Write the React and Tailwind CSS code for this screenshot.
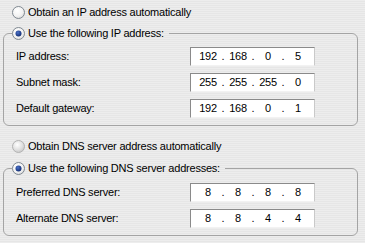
import React, { useId } from "react";

function Radio({ checked, dim }) {
  const id = useId().replace(/:/g, "");
  return (
    <svg width="13" height="13" viewBox="0 0 13 13" className="shrink-0 block">
      <defs>
        <radialGradient id={`g${id}`} cx="40%" cy="35%" r="75%">
          <stop offset="0" stopColor="#ffffff" />
          <stop offset="0.6" stopColor={dim ? "#dedede" : "#f2f2f2"} />
          <stop offset="1" stopColor={dim ? "#c0c0c0" : "#d2d2d2"} />
        </radialGradient>
        <radialGradient id={`d${id}`} cx="40%" cy="35%" r="70%">
          <stop offset="0" stopColor="#4a70c8" />
          <stop offset="1" stopColor="#0f2a6e" />
        </radialGradient>
      </defs>
      <circle
        cx="6.5"
        cy="6.5"
        r="6"
        fill={`url(#g${id})`}
        stroke={dim ? "#b3b3b3" : "#7f8891"}
        strokeWidth="1"
      />
      {checked && <circle cx="6.5" cy="6.5" r="3" fill={`url(#d${id})`} />}
    </svg>
  );
}

function IpBox({ parts }) {
  return (
    <div className="flex h-[19px] w-[125px] items-center border border-t-[#8a8a8a] border-l-[#8a8a8a] border-r-[#c9c9c9] border-b-[#f2f2f2] bg-white pl-[5px]">
      {parts.map((p, i) => (
        <React.Fragment key={i}>
          {i > 0 && <span className="w-[6px] text-center">.</span>}
          <span className="w-[24px] text-center">{p}</span>
        </React.Fragment>
      ))}
    </div>
  );
}

function Row({ label, parts }) {
  return (
    <div className="flex items-center">
      <span className="w-[174px]">{label}</span>
      <IpBox parts={parts} />
    </div>
  );
}

function Group({ title, rows, pt }) {
  return (
    <fieldset className="ml-[3px] mr-[7px] rounded-[6px] border border-[#a4a4a4] px-0 pb-[7px]">
      <legend className="ml-[8px] pr-[5px]">
        <div className="flex h-[13px] items-center gap-[3px]">
          <Radio checked />
          <span>{title}</span>
        </div>
      </legend>
      <div className={`flex flex-col gap-[7px] pl-[12px] ${pt}`}>
        {rows.map((r) => (
          <Row key={r.label} label={r.label} parts={r.parts} />
        ))}
      </div>
    </fieldset>
  );
}

export default function App() {
  return (
    <div className="h-[243px] w-[365px] overflow-hidden bg-[repeating-linear-gradient(to_bottom,#ededed_0px,#ededed_1px,#e6e6e6_1px,#e6e6e6_2px)] pt-[6px] font-['Liberation_Sans',Arial,sans-serif] text-[11px] leading-[13px] tracking-[-0.22px] text-black">
      <div className="flex h-[13px] items-center gap-[3px] pl-[12px]">
        <Radio />
        <span>Obtain an IP address automatically</span>
      </div>
      <div className="mt-[8px]">
        <Group
          title="Use the following IP address:"
          pt="pt-[7px]"
          rows={[
            { label: "IP address:", parts: ["192", "168", "0", "5"] },
            { label: "Subnet mask:", parts: ["255", "255", "255", "0"] },
            { label: "Default gateway:", parts: ["192", "168", "0", "1"] },
          ]}
        />
      </div>
      <div className="mt-[14px] flex h-[13px] items-center gap-[3px] pl-[12px]">
        <Radio dim />
        <span>Obtain DNS server address automatically</span>
      </div>
      <div className="mt-[9px]">
        <Group
          title="Use the following DNS server addresses:"
          pt="pt-[8px]"
          rows={[
            { label: "Preferred DNS server:", parts: ["8", "8", "8", "8"] },
            { label: "Alternate DNS server:", parts: ["8", "8", "4", "4"] },
          ]}
        />
      </div>
    </div>
  );
}
